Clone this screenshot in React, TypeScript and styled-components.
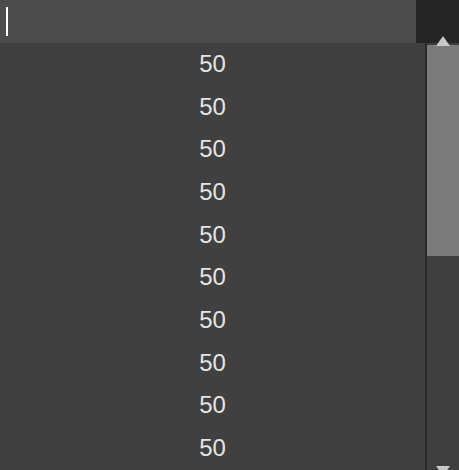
import React from 'react'
import styled, { createGlobalStyle } from 'styled-components'

const GlobalStyle = createGlobalStyle`
    html, body {
        margin: 0;
        padding: 0;
        background: #404040;
        overflow: hidden;
    }
    body {
        font-family: "Liberation Sans", Arial, sans-serif;
    }
`

const Page = styled.div`
    display: flex;
    flex-direction: column;
    width: 459px;
    height: 470px;
    overflow: hidden;
`

const TopBar = styled.div`
    display: flex;
    height: 43px;
    flex-shrink: 0;
`

const SearchField = styled.div`
    flex: 1;
    background: #4c4c4c;
    padding: 7px 0 0 6px;
    box-sizing: border-box;
`

const Caret = styled.div`
    width: 2px;
    height: 29px;
    background: #ffffff;
`

const Corner = styled.div`
    width: 43px;
    background: #252525;
`

const Body = styled.div`
    display: flex;
    height: 427px;
`

const List = styled.div`
    flex: 1;
    display: flex;
    flex-direction: column;
    background: #404040;
`

const Row = styled.div`
    height: 42.7px;
    flex-shrink: 0;
    display: flex;
    align-items: center;
    justify-content: center;
    color: #e4e4e4;
    font-size: 24px;
    padding-bottom: 1px;
    box-sizing: border-box;
`

const Separator = styled.div`
    width: 2px;
    background: #2a2a2a;
`

const ScrollTrack = styled.div`
    position: relative;
    width: 32px;
    background: #3f3f3f;
    padding-top: 2px;
    box-sizing: border-box;
`

const Thumb = styled.div`
    height: 211px;
    background: #7b7b7b;
`

const Arrow = styled.div<{ $up?: boolean }>`
    position: absolute;
    left: 9px;
    width: 0;
    height: 0;
    border-left: 7px solid transparent;
    border-right: 7px solid transparent;
    ${({ $up }) => ($up
        ? 'top: -7px; border-bottom: 10px solid #c9c9c9;'
        : 'bottom: -6px; border-top: 10px solid #c9c9c9;')}
`

const rows = Array.from({ length: 10 }, () => 50)

const App: React.FC = () => {
    return (
        <Page>
            <GlobalStyle />
            <TopBar>
                <SearchField>
                    <Caret />
                </SearchField>
                <Corner />
            </TopBar>
            <Body>
                <List>
                    {rows.map((value, i) => (
                        <Row key={i}>{value}</Row>
                    ))}
                </List>
                <Separator />
                <ScrollTrack>
                    <Arrow $up />
                    <Thumb />
                    <Arrow />
                </ScrollTrack>
            </Body>
        </Page>
    )
}

export default App
